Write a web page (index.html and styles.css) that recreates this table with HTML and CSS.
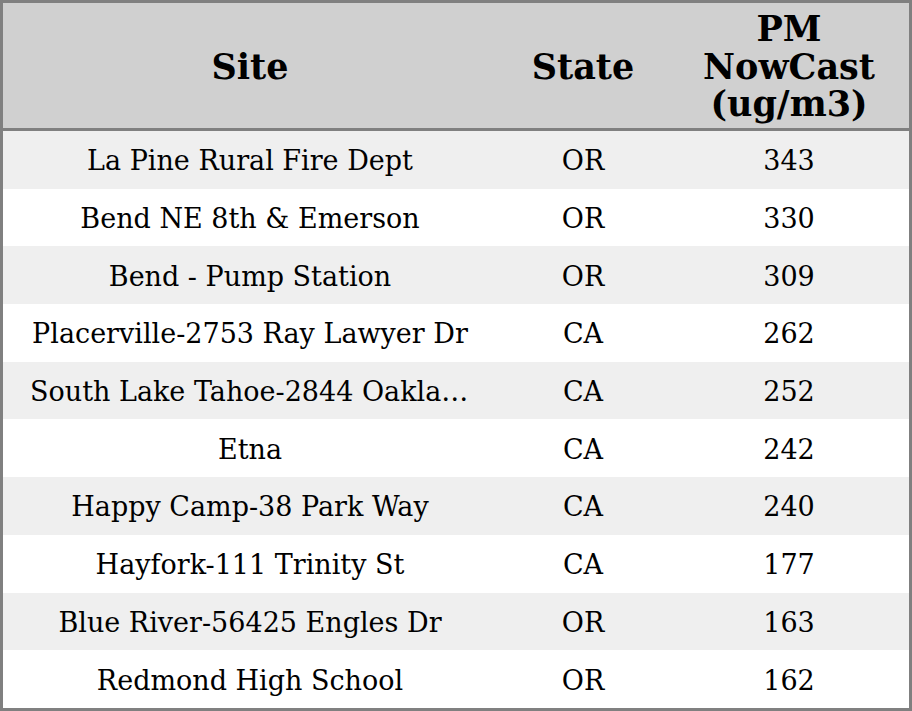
FILE: index.html
```html
<!DOCTYPE html>
<html>
<head>
<meta charset="utf-8">
<link rel="stylesheet" href="styles.css">
</head>
<body>
<table class="aq-table">
  <colgroup>
    <col class="col-site">
    <col class="col-state">
    <col class="col-pm">
  </colgroup>
  <thead>
    <tr>
      <th>Site</th>
      <th>State</th>
      <th>PM<br>NowCast<br>(ug/m3)</th>
    </tr>
  </thead>
  <tbody>
    <tr><td class="site">La Pine Rural Fire Dept</td><td>OR</td><td>343</td></tr>
    <tr><td class="site">Bend NE 8th &amp; Emerson</td><td>OR</td><td>330</td></tr>
    <tr><td class="site">Bend - Pump Station</td><td>OR</td><td>309</td></tr>
    <tr><td class="site">Placerville-2753 Ray Lawyer Dr</td><td>CA</td><td>262</td></tr>
    <tr><td class="site">South Lake Tahoe-2844 Oakland Ave</td><td>CA</td><td>252</td></tr>
    <tr><td class="site">Etna</td><td>CA</td><td>242</td></tr>
    <tr><td class="site">Happy Camp-38 Park Way</td><td>CA</td><td>240</td></tr>
    <tr><td class="site">Hayfork-111 Trinity St</td><td>CA</td><td>177</td></tr>
    <tr><td class="site">Blue River-56425 Engles Dr</td><td>OR</td><td>163</td></tr>
    <tr><td class="site">Redmond High School</td><td>OR</td><td>162</td></tr>
  </tbody>
</table>
</body>
</html>
```
FILE: styles.css
```css
html, body {
  margin: 0;
  padding: 0;
  background: #ffffff;
}
.aq-table {
  width: 912px;
  height: 711px;
  border: 3px solid #808080;
  border-collapse: separate;
  border-spacing: 0;
  table-layout: fixed;
  box-sizing: border-box;
  font-family: "DejaVu Serif", serif;
  color: #000;
}
.col-site { width: 494px; }
.col-state { width: 172px; }
.col-pm { width: 240px; }
.aq-table th {
  background: #d0d0d0;
  font-size: 35px;
  font-weight: bold;
  line-height: 37.5px;
  height: 123px;
  padding: 2px 0 0 0;
  text-align: center;
  vertical-align: middle;
  border-bottom: 3px solid #808080;
}
.aq-table td {
  font-size: 27px;
  height: 55.7px;
  padding: 2px 27px 0 27px;
  text-align: center;
  vertical-align: middle;
  white-space: nowrap;
  overflow: hidden;
  text-overflow: ellipsis;
}
.aq-table tbody tr:nth-child(odd) td {
  background: #efefef;
}
```
